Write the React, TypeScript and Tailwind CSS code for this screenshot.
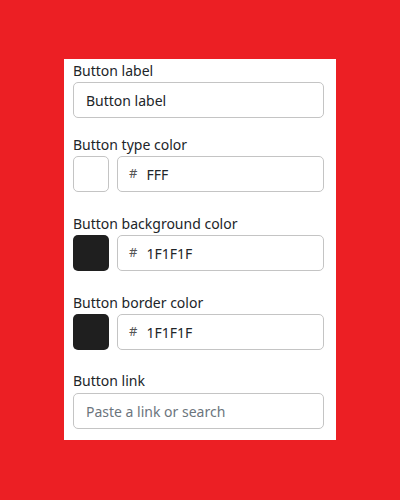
export default function App() {
  return (
    <div className="w-[400px] h-[500px] bg-[#ec1f24] pt-[59px] pl-16">
      <div
        className="w-[272px] h-[381px] bg-white pl-[9px] pr-[12px] pt-[2px] text-[14px] text-[#212529]"
        style={{ fontFamily: '"Noto Sans", sans-serif' }}
      >
        <label className="block h-[21px] leading-[20px]">Button label</label>
        <input
          className="block w-[251px] h-[36px] border border-[#c4c4c4] rounded-[5px] px-[12px] outline-none text-[#212529]"
          defaultValue="Button label"
        />

        <label className="block mt-[17px] h-[21px] leading-[20px]">Button type color</label>
        <ColorRow swatch="bg-white border border-[#c4c4c4]" value="FFF" />

        <label className="block mt-[22px] h-[21px] leading-[20px]">Button background color</label>
        <ColorRow swatch="bg-[#1f1f1f]" value="1F1F1F" />

        <label className="block mt-[22px] h-[21px] leading-[20px]">Button border color</label>
        <ColorRow swatch="bg-[#1f1f1f]" value="1F1F1F" />

        <label className="block mt-[21px] h-[22px] leading-[20px]">Button link</label>
        <input
          className="block w-[251px] h-[36px] border border-[#c4c4c4] rounded-[5px] px-[12px] outline-none placeholder:text-[#6c757d]"
          placeholder="Paste a link or search"
        />
      </div>
    </div>
  );
}

function ColorRow({ swatch, value }: { swatch: string; value: string }) {
  return (
    <div className="flex gap-2 h-[36px]">
      <div className={`w-[36px] h-[36px] rounded-[5px] ${swatch}`} />
      <div className="flex-1 flex items-center border border-[#c4c4c4] rounded-[5px] pl-[11px]">
        <span className="text-[#555] text-[13px]">#</span>
        <span className="ml-[9px]">{value}</span>
      </div>
    </div>
  );
}
